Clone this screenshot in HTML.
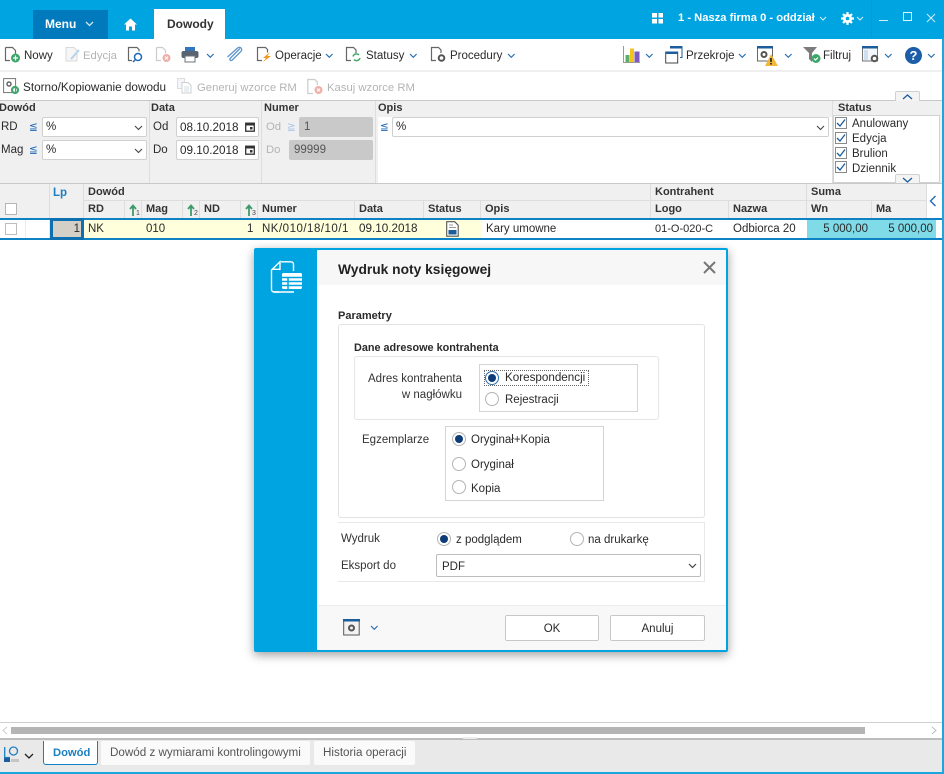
<!DOCTYPE html>
<html><head><meta charset="utf-8"><style>
html,body{margin:0;padding:0}
body{width:944px;height:774px;position:relative;overflow:hidden;background:#fff;font-family:"Liberation Sans",sans-serif;font-size:11.5px;color:#2a2a2a}
#w{position:absolute;left:0;top:0;width:944px;height:774px;overflow:hidden;filter:blur(.35px)}
.a{position:absolute}
.t{position:absolute;white-space:nowrap;line-height:14px}
.b{font-weight:bold}
.g{color:#b4b4b4;font-size:11.3px}
.h{position:absolute;font-size:11px;font-weight:bold;color:#333;white-space:nowrap;line-height:14px}
.inp{position:absolute;background:#fff;border:1px solid #d0d0d0;border-radius:2px;box-sizing:border-box;height:20px;line-height:18px;padding-left:3px;font-size:11.5px}
.dis{position:absolute;background:#c9c9c9;border-radius:2px;height:20px;line-height:20px;color:#555;font-size:11.5px}
.v{position:absolute;width:1px;background:#ddd}
.hl{position:absolute;height:1px;background:#ddd}
.cb{position:absolute;width:10px;height:10px;border:1px solid #8a8a8a;background:#fff}
.r{position:absolute;width:12px;height:12px;border:1px solid #b4b4b4;border-radius:50%;background:#fff;box-sizing:content-box}
.r.on:after{content:"";position:absolute;left:2px;top:2px;width:8px;height:8px;border-radius:50%;background:#0d3c78}
.le{position:absolute;white-space:nowrap;line-height:14px;font-family:"DejaVu Sans",sans-serif;font-size:10.5px;color:#1c69b4}
.sub{position:absolute;font-size:7px;line-height:8px;color:#444}
svg{position:absolute;overflow:visible}
</style></head><body><div id="w">

<!-- title bar -->
<div class="a" style="left:0;top:0;width:944px;height:39px;background:#00a4e1"></div>
<div class="a" style="left:33px;top:10px;width:75px;height:29px;background:#0179bd"></div>
<div class="t b" style="left:45px;top:17px;color:#fff;font-size:12px">Menu</div>
<svg style="left:85px;top:21px" width="9" height="6"><path d="M1 1l3.500 3.500L8 1" fill="none" stroke="#cfe8f6" stroke-width="1.300"/></svg>
<svg style="left:124px;top:18px" width="13" height="13"><path d="M0 6.500L6.500 0.500 13 6.500H11V12.500H8V8.500H5V12.500H2V6.500Z" fill="#fff"/></svg>
<div class="a" style="left:154px;top:9px;width:71px;height:31px;background:#fff"></div>
<div class="t b" style="left:167px;top:17px;color:#333;font-size:12px">Dowody</div>
<svg style="left:652px;top:13px" width="11" height="11" fill="#fff"><rect width="5" height="4.500"/><rect x="6.500" width="4.500" height="4.500"/><rect y="6" width="5" height="4.500"/><rect x="6.500" y="6" width="4.500" height="4.500"/></svg>
<div class="t b" style="left:678px;top:11px;color:#fff;font-size:11.2px">1 - Nasza firma 0 - oddział</div>
<svg style="left:819px;top:16px" width="8" height="5"><path d="M1 1l3 3 3-3" fill="none" stroke="#d8effa" stroke-width="1"/></svg>
<svg style="left:841px;top:12px" width="13" height="13"><circle cx="6.500" cy="6.500" r="4.600" fill="#fff"/><path d="M6.500 0v13M0 6.500h13M2 2l9 9M11 2l-9 9" stroke="#fff" stroke-width="2.200"/><circle cx="6.500" cy="6.500" r="1.800" fill="#00a4e1"/></svg>
<svg style="left:856px;top:16px" width="8" height="5"><path d="M1 1l3 3 3-3" fill="none" stroke="#d8effa" stroke-width="1"/></svg>
<div class="a" style="left:871px;top:0;width:1px;height:38px;background:#0f96cf"></div>
<div class="a" style="left:879px;top:20px;width:9px;height:1px;background:#d6eefa"></div>
<div class="a" style="left:903px;top:12px;width:7px;height:7px;border:1px solid #e4f4fc"></div>
<svg style="left:926px;top:13px" width="10" height="10"><path d="M1 1l8 8M9 1l-8 8" stroke="#d6eefa" stroke-width="1"/></svg>

<!-- toolbar 1 -->
<div class="hl" style="left:0;top:70px;width:942px;height:2px;background:#efefef"></div>
<svg style="left:4px;top:46px" width="17" height="17"><path d="M1.500 1.500h7l3 3v3M6 14.500H1.500v-13" fill="none" stroke="#666" stroke-width="1.200"/><circle cx="11.500" cy="12" r="4.500" fill="#3fa66b"/><path d="M11.500 9.500v5M9 12h5" stroke="#fff" stroke-width="1.200"/></svg>
<div class="t" style="left:24px;top:49px">Nowy</div>
<svg style="left:65px;top:46px" width="16" height="17"><path d="M1 1.500h8l3 3v10.500H1z" fill="#f6f6f6" stroke="#d9d9d9"/><path d="M6 13l8-9" stroke="#b5d2ea" stroke-width="2"/></svg>
<div class="t g" style="left:83px;top:49px">Edycja</div>
<svg style="left:127px;top:46px" width="17" height="17"><path d="M7 1.500H1.500v13H5M7 1.500h3l2 2v2" fill="none" stroke="#666" stroke-width="1.200"/><circle cx="11" cy="11" r="3.500" fill="none" stroke="#1c69b4" stroke-width="1.500"/><path d="M8.500 13.500L6 16" stroke="#1c69b4" stroke-width="1.500"/></svg>
<svg style="left:155px;top:46px" width="17" height="17"><path d="M1.500 1.500h6l3 3v3M6 14.500H1.500v-13" fill="none" stroke="#ccc" stroke-width="1.200"/><circle cx="11.500" cy="12" r="4" fill="#eeb0a8"/><path d="M10 10.500l3 3M13 10.500l-3 3" stroke="#fff"/></svg>
<svg style="left:181px;top:46px" width="18" height="17"><rect x="4" y="1" width="10" height="5" fill="#3277bd"/><rect x="0.500" y="5" width="17" height="7" rx="2" fill="#5a6470"/><rect x="4" y="10" width="10" height="6" fill="#fff" stroke="#6b737d"/></svg>
<svg style="left:206px;top:53px" width="9" height="6"><path d="M1 1l3.300 3.300L7.600 1" fill="none" stroke="#2a6fb2" stroke-width="1.200"/></svg>
<svg style="left:226px;top:45px" width="18" height="18"><path d="M15 3.500l-9.500 9.500c-1.500 1.500 0 3.500 1.800 2L16 6.300c2-2.300-1-5.500-3.400-3.300L2.500 12" transform="translate(-1 0)" fill="none" stroke="#5d95cf" stroke-width="1.300"/></svg>
<svg style="left:256px;top:46px" width="17" height="17"><path d="M6 14.500H1.500v-13h8l2 2v3" fill="none" stroke="#666" stroke-width="1.200"/><path d="M14 6L7 12h3l-3 4 8-6h-3.500z" fill="#ef9a1f"/></svg>
<div class="t" style="left:275px;top:49px">Operacje</div>
<svg style="left:325px;top:53px" width="9" height="6"><path d="M1 1l3.300 3.300L7.600 1" fill="none" stroke="#2a6fb2" stroke-width="1.200"/></svg>
<svg style="left:345px;top:46px" width="17" height="17"><path d="M6 14.500H1.500v-13h7l2.500 2.500v3" fill="none" stroke="#666" stroke-width="1.200"/><path d="M8 10.500a3.500 3.500 0 0 1 6-1.500M15 12a3.500 3.500 0 0 1-6 1.500" fill="none" stroke="#42a866" stroke-width="1.500"/></svg>
<div class="t" style="left:366px;top:49px">Statusy</div>
<svg style="left:409px;top:53px" width="9" height="6"><path d="M1 1l3.300 3.300L7.600 1" fill="none" stroke="#2a6fb2" stroke-width="1.200"/></svg>
<svg style="left:430px;top:46px" width="17" height="17"><path d="M6 14.500H1.500v-13h7l2.500 2.500v3" fill="none" stroke="#666" stroke-width="1.200"/><circle cx="11.500" cy="12" r="2.800" fill="none" stroke="#555" stroke-width="2"/></svg>
<div class="t" style="left:450px;top:49px">Procedury</div>
<svg style="left:507px;top:53px" width="9" height="6"><path d="M1 1l3.300 3.300L7.600 1" fill="none" stroke="#2a6fb2" stroke-width="1.200"/></svg>

<svg style="left:623px;top:46px" width="18" height="18"><path d="M0.500 0v16.500H17" fill="none" stroke="#999"/><rect x="2.500" y="9" width="4" height="7" fill="#58b368"/><rect x="7" y="2.500" width="4" height="13.500" fill="#f6c21c"/><rect x="11.500" y="5.500" width="5" height="10.500" fill="#7a5bbd"/></svg>
<svg style="left:645px;top:53px" width="9" height="6"><path d="M1 1l3.300 3.300L7.600 1" fill="none" stroke="#2a6fb2" stroke-width="1.200"/></svg>
<svg style="left:665px;top:46px" width="18" height="18"><path d="M5.500 0.500h11.500v11h-2" fill="none" stroke="#1c5d9c"/><rect x="5" y="0" width="12" height="2.500" fill="#1c5d9c"/><rect x="0.700" y="6" width="12" height="11" fill="#fff" stroke="#444"/><rect x="0.500" y="5.500" width="12.500" height="2.500" fill="#1c5d9c"/></svg>
<div class="t" style="left:686px;top:49px">Przekroje</div>
<svg style="left:738px;top:53px" width="9" height="6"><path d="M1 1l3.300 3.300L7.600 1" fill="none" stroke="#2a6fb2" stroke-width="1.200"/></svg>
<svg style="left:757px;top:46px" width="22" height="20"><rect x="0.500" y="1" width="15" height="14" fill="#fff" stroke="#666"/><rect x="0" y="0" width="16" height="2.500" fill="#1c5d9c"/><circle cx="7" cy="8.500" r="2.500" fill="none" stroke="#555" stroke-width="2"/><path d="M14 8l7 12H8z" fill="#f0b73b"/><path d="M14 12v4M14 17v1.500" stroke="#222" stroke-width="1.600"/></svg>
<svg style="left:784px;top:53px" width="9" height="6"><path d="M1 1l3.300 3.300L7.600 1" fill="none" stroke="#2a6fb2" stroke-width="1.200"/></svg>
<svg style="left:803px;top:47px" width="19" height="17"><path d="M0 0h14L9 6v9L6 12V6z" fill="#7c7c7c"/><circle cx="13" cy="11.500" r="4.500" fill="#3fa66b"/><path d="M11 11.500l1.500 1.500 2.500-2.500" fill="none" stroke="#fff" stroke-width="1.200"/></svg>
<div class="t" style="left:823px;top:49px">Filtruj</div>
<svg style="left:862px;top:46px" width="19" height="18"><rect x="0.500" y="1" width="15" height="14" fill="#f3f6fa" stroke="#777"/><rect x="0" y="0" width="16" height="2.500" fill="#1c5d9c"/><rect x="2" y="4" width="4" height="10" fill="#cfdff0"/><circle cx="12.500" cy="12.500" r="2.800" fill="#fff" stroke="#555" stroke-width="2"/></svg>
<svg style="left:884px;top:53px" width="9" height="6"><path d="M1 1l3.300 3.300L7.600 1" fill="none" stroke="#2a6fb2" stroke-width="1.200"/></svg>
<div class="a b" style="left:905px;top:47px;width:17px;height:17px;border-radius:50%;background:#1c5fa8;color:#fff;text-align:center;line-height:17px;font-size:13px">?</div>
<svg style="left:927px;top:53px" width="9" height="6"><path d="M1 1l3.300 3.300L7.600 1" fill="none" stroke="#2a6fb2" stroke-width="1.200"/></svg>

<!-- toolbar 2 -->
<svg style="left:3px;top:78px" width="17" height="17"><rect x="0.600" y="0.600" width="12" height="14" fill="#fff" stroke="#777"/><circle cx="6" cy="6" r="2" fill="none" stroke="#666" stroke-width="1.500"/><circle cx="12" cy="12" r="3" fill="none" stroke="#3fa66b" stroke-width="2.200"/></svg>
<div class="t" style="left:23px;top:81px;font-size:11.75px">Storno/Kopiowanie dowodu</div>
<svg style="left:177px;top:78px" width="17" height="17"><rect x="0.500" y="0.500" width="7" height="10" fill="#f3f7fb" stroke="#ddd"/><path d="M5 4.500h6l3 3V15H5z" fill="#fff" stroke="#cfcfcf"/><path d="M7 9h5M7 11h5M7 13h5" stroke="#cfdce8"/></svg>
<div class="t g" style="left:197px;top:81px">Generuj wzorce RM</div>
<svg style="left:307px;top:78px" width="17" height="17"><path d="M6 15.500H0.800v-14h7l2.500 2.500v3" fill="none" stroke="#ccc" stroke-width="1.200"/><circle cx="11.500" cy="12" r="4" fill="#eeb0a8"/><path d="M10 10.500l3 3M13 10.500l-3 3" stroke="#fff"/></svg>
<div class="t g" style="left:327px;top:81px">Kasuj wzorce RM</div>

<!-- filter panel -->
<div class="a" style="left:0;top:100px;width:942px;height:84px;background:#f0f0f0;border-top:1px solid #c8c8c8;border-bottom:1px solid #c9c9c9;box-sizing:border-box"></div>
<div class="a" style="left:378px;top:117px;width:454px;height:66px;background:#fff"></div>
<div class="v" style="left:149px;top:101px;height:82px"></div>
<div class="v" style="left:261px;top:101px;height:82px"></div>
<div class="v" style="left:375px;top:101px;height:82px"></div>
<div class="v" style="left:832px;top:101px;height:82px"></div>
<div class="h" style="left:-1px;top:101px">Dowód</div>
<div class="h" style="left:151px;top:101px">Data</div>
<div class="h" style="left:264px;top:101px">Numer</div>
<div class="h" style="left:378px;top:101px">Opis</div>
<div class="h" style="left:838px;top:101px">Status</div>
<div class="t" style="left:1px;top:120px">RD</div>
<div class="t" style="left:1px;top:143px">Mag</div>
<div class="le" style="left:29px;top:120px">≦</div>
<div class="le" style="left:29px;top:143px">≦</div>
<div class="inp" style="left:42px;top:117px;width:105px">%</div>
<div class="inp" style="left:42px;top:140px;width:105px">%</div>
<svg style="left:134px;top:125px" width="9" height="6"><path d="M1 1l3.500 3.500L8 1" fill="none" stroke="#444" stroke-width="1.100"/></svg>
<svg style="left:134px;top:148px" width="9" height="6"><path d="M1 1l3.500 3.500L8 1" fill="none" stroke="#444" stroke-width="1.100"/></svg>
<div class="t" style="left:153px;top:120px">Od</div>
<div class="t" style="left:153px;top:143px">Do</div>
<div class="inp" style="left:176px;top:117px;width:83px;font-size:11.7px;padding-left:3px;line-height:20px">08.10.2018</div>
<div class="inp" style="left:176px;top:140px;width:83px;font-size:11.7px;padding-left:3px;line-height:20px">09.10.2018</div>
<svg style="left:245px;top:122px" width="10" height="10"><rect x="0.700" y="1.200" width="8.600" height="8" fill="none" stroke="#333" stroke-width="1.300"/><rect x="1" y="1" width="8" height="2.500" fill="#333"/><rect x="5" y="5" width="2.500" height="2.500" fill="#333"/></svg>
<svg style="left:245px;top:145px" width="10" height="10"><rect x="0.700" y="1.200" width="8.600" height="8" fill="none" stroke="#333" stroke-width="1.300"/><rect x="1" y="1" width="8" height="2.500" fill="#333"/><rect x="5" y="5" width="2.500" height="2.500" fill="#333"/></svg>
<div class="t g" style="left:266px;top:120px">Od</div>
<div class="t g" style="left:266px;top:143px">Do</div>
<div class="le" style="left:287px;top:120px;color:#a9c8e4">≧</div>
<div class="dis" style="left:299px;top:117px;width:74px;padding-left:5px;box-sizing:border-box">1</div>
<div class="dis" style="left:289px;top:140px;width:84px;padding-left:5px;box-sizing:border-box">99999</div>
<div class="le" style="left:380px;top:120px">≦</div>
<div class="inp" style="left:392px;top:117px;width:437px">%</div>
<svg style="left:816px;top:125px" width="9" height="6"><path d="M1 1l3.500 3.500L8 1" fill="none" stroke="#444" stroke-width="1.100"/></svg>
<div class="a" style="left:833px;top:115px;width:107px;height:68px;background:#fff;border:1px solid #d2d2d2;box-sizing:border-box"></div>
<div class="cb" style="left:835px;top:117px"></div><svg style="left:836px;top:118px" width="11" height="11"><path d="M1 5l3 3 5-6.500" fill="none" stroke="#1c5d9c" stroke-width="1.300"/></svg><div class="t" style="left:852px;top:117px">Anulowany</div>
<div class="cb" style="left:835px;top:132px"></div><svg style="left:836px;top:133px" width="11" height="11"><path d="M1 5l3 3 5-6.500" fill="none" stroke="#1c5d9c" stroke-width="1.300"/></svg><div class="t" style="left:852px;top:132px">Edycja</div>
<div class="cb" style="left:835px;top:147px"></div><svg style="left:836px;top:148px" width="11" height="11"><path d="M1 5l3 3 5-6.500" fill="none" stroke="#1c5d9c" stroke-width="1.300"/></svg><div class="t" style="left:852px;top:147px">Brulion</div>
<div class="cb" style="left:835px;top:161px"></div><svg style="left:836px;top:162px" width="11" height="11"><path d="M1 5l3 3 5-6.500" fill="none" stroke="#1c5d9c" stroke-width="1.300"/></svg><div class="t" style="left:852px;top:162px">Dziennik</div>
<div class="a" style="left:895px;top:91px;width:25px;height:10px;background:#f4f4f4;border:1px solid #d0d0d0;border-bottom:0;border-radius:2px 2px 0 0;box-sizing:border-box"></div>
<svg style="left:902px;top:94px" width="11" height="6"><path d="M1 5l4.500-4L10 5" fill="none" stroke="#1c5d9c" stroke-width="1.300"/></svg>
<div class="a" style="left:895px;top:174px;width:25px;height:9px;background:#f4f4f4;border:1px solid #d0d0d0;border-bottom:0;border-radius:2px 2px 0 0;box-sizing:border-box"></div>
<svg style="left:902px;top:177px" width="11" height="6"><path d="M1 1l4.500 4L10 1" fill="none" stroke="#1c5d9c" stroke-width="1.300"/></svg>

<!-- grid header -->
<div class="a" style="left:0;top:184px;width:926px;height:34px;background:#f0f0f0"></div>
<div class="hl" style="left:83px;top:200px;width:843px"></div>
<div class="v" style="left:49px;top:184px;height:34px"></div>
<div class="v" style="left:83px;top:184px;height:34px"></div>
<div class="v" style="left:124px;top:200px;height:18px"></div>
<div class="v" style="left:141px;top:200px;height:18px"></div>
<div class="v" style="left:182px;top:200px;height:18px"></div>
<div class="v" style="left:199px;top:200px;height:18px"></div>
<div class="v" style="left:240px;top:200px;height:18px"></div>
<div class="v" style="left:257px;top:200px;height:18px"></div>
<div class="v" style="left:354px;top:200px;height:18px"></div>
<div class="v" style="left:423px;top:200px;height:18px"></div>
<div class="v" style="left:480px;top:200px;height:18px"></div>
<div class="v" style="left:650px;top:184px;height:34px"></div>
<div class="v" style="left:728px;top:200px;height:18px"></div>
<div class="v" style="left:806px;top:184px;height:34px"></div>
<div class="v" style="left:871px;top:200px;height:18px"></div>
<div class="v" style="left:926px;top:184px;height:34px"></div>
<div class="cb" style="left:5px;top:203px;border-color:#b5b5b5"></div>
<div class="h" style="left:53px;top:186px;color:#1c7fc0;font-size:11.5px">Lp</div>
<div class="h" style="left:88px;top:185px">Dowód</div>
<div class="h" style="left:88px;top:202px">RD</div>
<div class="h" style="left:146px;top:202px">Mag</div>
<div class="h" style="left:204px;top:202px">ND</div>
<div class="h" style="left:262px;top:202px">Numer</div>
<div class="h" style="left:359px;top:202px">Data</div>
<div class="h" style="left:428px;top:202px">Status</div>
<div class="h" style="left:485px;top:202px">Opis</div>
<div class="h" style="left:655px;top:185px">Kontrahent</div>
<div class="h" style="left:655px;top:202px">Logo</div>
<div class="h" style="left:733px;top:202px">Nazwa</div>
<div class="h" style="left:811px;top:185px">Suma</div>
<div class="h" style="left:811px;top:202px">Wn</div>
<div class="h" style="left:876px;top:202px">Ma</div>
<svg style="left:129px;top:204px" width="10" height="13"><path d="M4 12V2M1 5l3-3.500L7 5" fill="none" stroke="#3f9a6a" stroke-width="1.800"/></svg><div class="sub" style="left:136px;top:210px">1</div>
<svg style="left:187px;top:204px" width="10" height="13"><path d="M4 12V2M1 5l3-3.500L7 5" fill="none" stroke="#3f9a6a" stroke-width="1.800"/></svg><div class="sub" style="left:194px;top:210px">2</div>
<svg style="left:245px;top:204px" width="10" height="13"><path d="M4 12V2M1 5l3-3.500L7 5" fill="none" stroke="#3f9a6a" stroke-width="1.800"/></svg><div class="sub" style="left:252px;top:210px">3</div>
<svg style="left:929px;top:195px" width="8" height="12"><path d="M6.500 1L1.500 6l5 5" fill="none" stroke="#1c69b4" stroke-width="1.400"/></svg>

<!-- row -->
<div class="a" style="left:0;top:218px;width:942px;height:2px;background:#0f82c4"></div>
<div class="a" style="left:0;top:238px;width:942px;height:2px;background:#0f82c4"></div>
<div class="a" style="left:84px;top:220px;width:398px;height:18px;background:#ffffdc"></div>
<div class="a" style="left:807px;top:220px;width:129px;height:18px;background:#80dbe9"></div>
<div class="v" style="left:25px;top:220px;height:18px;background:#e3eef5"></div>
<div class="v" style="left:49px;top:220px;height:18px;background:#e3eef5"></div>
<div class="a" style="left:50px;top:218px;width:34px;height:22px;border:3px solid #0f70b0;background:#d4d0c8;box-sizing:border-box"></div>
<div class="cb" style="left:5px;top:223px;border-color:#bdbdbd"></div>
<div class="t" style="left:50px;top:222px;width:30px;text-align:right">1</div>
<div class="t" style="left:88px;top:222px">NK</div>
<div class="t" style="left:146px;top:222px">010</div>
<div class="t" style="left:247px;top:222px">1</div>
<div class="t" style="left:262px;top:222px;letter-spacing:.5px">NK/010/18/10/1</div>
<div class="t" style="left:359px;top:222px;font-size:11.7px">09.10.2018</div>
<svg style="left:446px;top:221px" width="13" height="16"><path d="M0.700 0.700h8l3.500 3.500v11h-11.500z" fill="#fff" stroke="#555" stroke-width="1.100"/><path d="M3 4h4M3 6.500h7" stroke="#999"/><rect x="2.500" y="9" width="8" height="4.500" fill="#1c5d9c"/></svg>
<div class="t" style="left:486px;top:222px">Kary umowne</div>
<div class="t" style="left:655px;top:222px;font-size:11px">01-O-020-C</div>
<div class="t" style="left:733px;top:222px">Odbiorca 20</div>
<div class="t" style="left:807px;top:222px;width:61px;text-align:right">5 000,00</div>
<div class="t" style="left:872px;top:222px;width:61px;text-align:right">5 000,00</div>

<!-- right edge / bottom -->
<div class="a" style="left:942px;top:39px;width:2px;height:735px;background:#1aa7e0"></div>
<div class="hl" style="left:0;top:722px;width:942px;background:#cfcfcf"></div>
<div class="a" style="left:11px;top:727px;width:854px;height:7px;background:#b5b5b5"></div>
<svg style="left:2px;top:726px" width="6" height="9"><path d="M5 1L1 4.500 5 8" fill="none" stroke="#ccc"/></svg>
<svg style="left:931px;top:726px" width="6" height="9"><path d="M1 1l4 3.500L1 8" fill="none" stroke="#bbb"/></svg>
<div class="a" style="left:0;top:738px;width:942px;height:34px;background:#e9e9e9;border-top:2px solid #bdbdbd;box-sizing:border-box"></div>
<div class="a" style="left:0;top:772px;width:944px;height:2px;background:#1aa7e0"></div>
<div class="a" style="left:463px;top:737px;width:14px;height:2px;background:#ececec"></div>
<svg style="left:4px;top:746px" width="17" height="17"><path d="M0.700 1v10.500H6" fill="none" stroke="#1c7fc0" stroke-width="1.300"/><circle cx="9.500" cy="5" r="4" fill="none" stroke="#1c7fc0" stroke-width="1.300"/><rect x="0" y="12" width="6" height="4" fill="#1c5d9c"/><rect x="7" y="13" width="8" height="3" fill="#c5c5c5"/></svg>
<svg style="left:24px;top:753px" width="10" height="6"><path d="M1 1l4 4 4-4" fill="none" stroke="#222" stroke-width="1.300"/></svg>
<div class="a" style="left:43px;top:741px;width:55px;height:24px;background:#fff;border:1px solid #0f82c4;border-top:0;border-radius:0 0 3px 3px;box-sizing:border-box"></div>
<div class="t b" style="left:53px;top:746px;color:#1c7fc0;font-size:11.2px">Dowód</div>
<div class="a" style="left:101px;top:741px;width:209px;height:24px;background:#fafafa;border-radius:2px"></div>
<div class="t" style="left:110px;top:746px;color:#555;font-size:11.65px">Dowód z wymiarami kontrolingowymi</div>
<div class="a" style="left:314px;top:741px;width:101px;height:24px;background:#fafafa;border-radius:2px"></div>
<div class="t" style="left:323px;top:746px;color:#555;font-size:11.65px">Historia operacji</div>

<!-- dialog -->
<div class="a" style="left:254px;top:248px;width:474px;height:404px;background:#00a4e1;border-radius:2px;box-shadow:0 3px 10px rgba(0,0,0,.38)"></div>
<div class="a" style="left:317px;top:250px;width:409px;height:400px;background:#fff;border-radius:1px"></div>
<div class="a" style="left:318px;top:250px;width:408px;height:35px;background:#f7f7f7"></div>
<div class="t b" style="left:338px;top:261px;font-size:13.8px;color:#222;line-height:17px">Wydruk noty księgowej</div>
<svg style="left:703px;top:261px" width="13" height="13"><path d="M1 1l11 11M12 1L1 12" stroke="#777" stroke-width="2"/></svg>
<svg style="left:271px;top:261px" width="32" height="32"><path d="M10 0.800H20a2.500 2.500 0 0 1 2.500 2.500V10M8 31H3a2.500 2.500 0 0 1-2.500-2.500V9L9 0.800v7.500H1" fill="none" stroke="#fff" stroke-width="1.400"/><rect x="11" y="12" width="20" height="16" rx="1.500" fill="#fff"/><path d="M11 16.500h20M11 20.500h20M11 24.500h20M17 16v12" stroke="#00a4e1" stroke-width="1.500"/><path d="M3 31h20" stroke="#fff" stroke-width="1.400"/></svg>

<div class="t b" style="left:338px;top:309px;font-size:11px">Parametry</div>
<div class="a" style="left:338px;top:324px;width:367px;height:194px;border:1px solid #e3e3e3;border-radius:3px;box-sizing:border-box"></div>
<div class="t b" style="left:354px;top:341px;font-size:10.85px">Dane adresowe kontrahenta</div>
<div class="a" style="left:354px;top:356px;width:305px;height:64px;border:1px solid #e6e6e6;border-radius:3px;box-sizing:border-box"></div>
<div class="t" style="left:340px;top:372px;width:122px;text-align:right;color:#333">Adres kontrahenta</div>
<div class="t" style="left:340px;top:388px;width:122px;text-align:right;color:#333">w nagłówku</div>
<div class="a" style="left:479px;top:364px;width:159px;height:48px;border:1px solid #d4d4d4;box-sizing:border-box"></div>
<div class="a" style="left:484px;top:370px;width:105px;height:16px;border:1px dotted #666;box-sizing:border-box"></div>
<div class="r on" style="left:485px;top:371px;border-color:#2a6fb2"></div>
<div class="t" style="left:505px;top:371px;font-size:11.65px">Korespondencji</div>
<div class="r" style="left:485px;top:392px"></div>
<div class="t" style="left:505px;top:393px">Rejestracji</div>
<div class="t" style="left:362px;top:433px;color:#333">Egzemplarze</div>
<div class="a" style="left:445px;top:426px;width:159px;height:75px;border:1px solid #d4d4d4;box-sizing:border-box"></div>
<div class="r on" style="left:452px;top:432px"></div>
<div class="t" style="left:471px;top:433px">Oryginał+Kopia</div>
<div class="r" style="left:452px;top:457px"></div>
<div class="t" style="left:471px;top:458px">Oryginał</div>
<div class="r" style="left:452px;top:480px"></div>
<div class="t" style="left:471px;top:482px">Kopia</div>

<div class="a" style="left:338px;top:522px;width:367px;height:60px;border:1px solid #e8e8e8;border-left:0;box-sizing:border-box"></div>
<div class="t" style="left:341px;top:532px;color:#333">Wydruk</div>
<div class="r on" style="left:437px;top:532px"></div>
<div class="t" style="left:456px;top:533px">z podglądem</div>
<div class="r" style="left:570px;top:532px"></div>
<div class="t" style="left:588px;top:533px">na drukarkę</div>
<div class="t" style="left:341px;top:559px;color:#333">Eksport do</div>
<div class="a" style="left:436px;top:554px;width:265px;height:23px;border:1px solid #bdbdbd;border-radius:2px;box-sizing:border-box;line-height:22px;padding-left:5px"><span style="position:relative;top:1px">PDF</span></div>
<svg style="left:688px;top:563px" width="9" height="6"><path d="M1 1l3.500 3.500L8 1" fill="none" stroke="#444" stroke-width="1.200"/></svg>

<div class="a" style="left:318px;top:605px;width:408px;height:45px;background:#f8f8f8;border-top:1px solid #ececec;box-sizing:border-box"></div>
<svg style="left:343px;top:619px" width="17" height="17"><rect x="0.700" y="1" width="15.500" height="15" fill="#f3f3f3" stroke="#555"/><rect x="0" y="0" width="17" height="2.500" fill="#1c5d9c"/><circle cx="8.500" cy="9" r="2.500" fill="none" stroke="#555" stroke-width="2"/></svg>
<svg style="left:370px;top:625px" width="9" height="6"><path d="M1 1l3.300 3.300L7.600 1" fill="none" stroke="#2a6fb2" stroke-width="1.200"/></svg>
<div class="a" style="left:505px;top:615px;width:94px;height:26px;background:#fff;border:1px solid #c8c8c8;border-radius:2px;box-sizing:border-box;text-align:center;line-height:26px">OK</div>
<div class="a" style="left:610px;top:615px;width:95px;height:26px;background:#fff;border:1px solid #c8c8c8;border-radius:2px;box-sizing:border-box;text-align:center;line-height:26px">Anuluj</div>
</div></body></html>
